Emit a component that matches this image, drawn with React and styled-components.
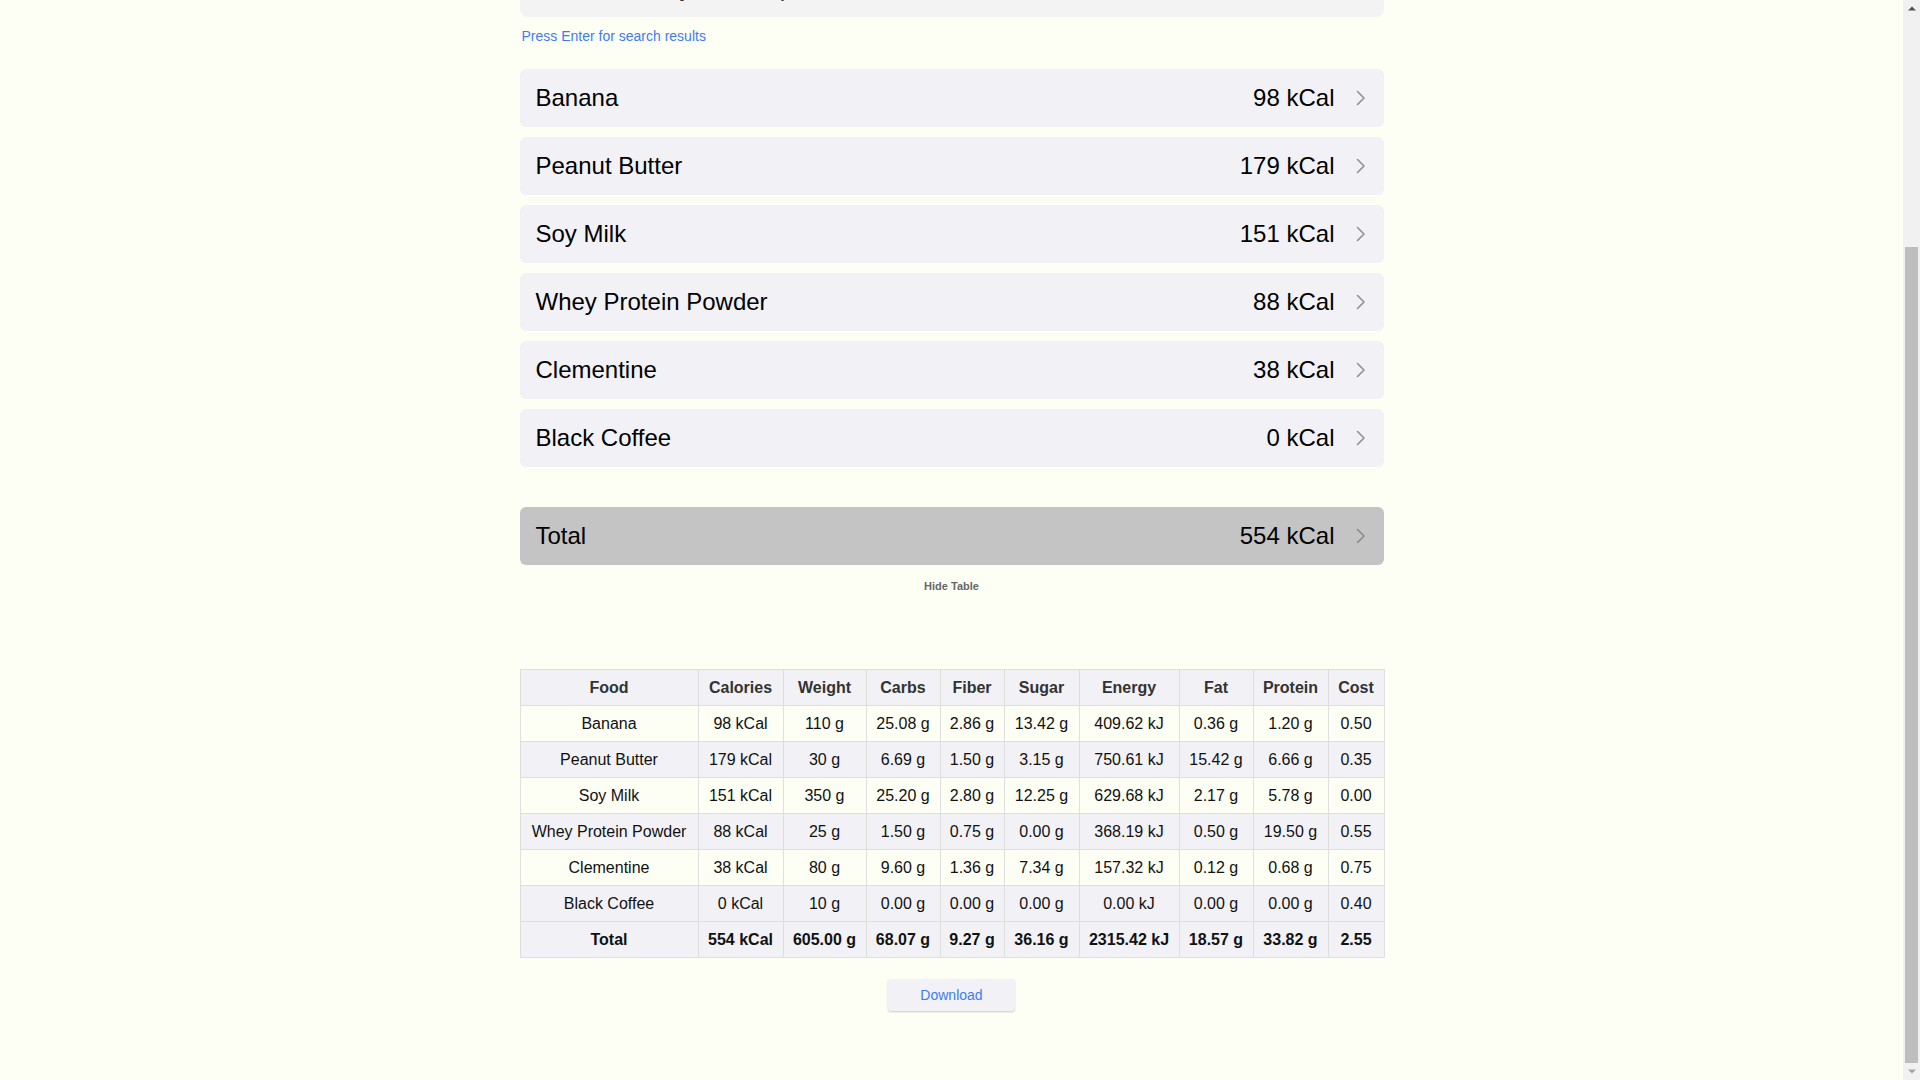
import React, { useLayoutEffect, useRef, useState } from "react";
import styled, { createGlobalStyle } from "styled-components";

const GlobalStyle = createGlobalStyle`
  html, body {
    margin: 0;
    padding: 0;
    height: 100%;
    overflow: hidden;
    background: #fdfff5;
    font-family: "Liberation Sans", Arial, Helvetica, sans-serif;
    color: #111;
  }
  #root { height: 100%; }
  * { box-sizing: border-box; }
`;

const Viewport = styled.div`
  display: flex;
  height: 100vh;
  background: #fdfff5;
`;

const Pane = styled.main`
  flex: 1;
  min-width: 0;
  height: 100%;
  overflow: hidden;
`;

const Rail = styled.div`
  width: 17px;
  flex: none;
  height: 100%;
  background: #f1f1f1;
  display: flex;
  flex-direction: column;
`;

const RailButton = styled.div`
  height: 17px;
  flex: none;
  display: flex;
  align-items: center;
  justify-content: center;
`;

const Track = styled.div`
  flex: 1;
  display: flex;
  flex-direction: column;
  padding: 0 2px;
`;

const Thumb = styled.div`
  flex: none;
  background: #bebebe;
`;

const Page = styled.div`
  width: 864px;
  margin: 0 auto;
  padding: 264px 0 69px;
  display: flex;
  flex-direction: column;
`;

const SearchBox = styled.div`
  height: 58px;
  background: #f3f3f3;
  border-radius: 8px;
  display: flex;
  align-items: center;
  padding: 0 18px 0 16px;
`;

const SearchInput = styled.input`
  flex: 1;
  border: none;
  outline: none;
  background: transparent;
  font-family: "Liberation Sans", Arial, sans-serif;
  font-size: 24px;
  color: #333;
  padding: 0;
`;

const Hint = styled.div`
  margin-top: 11px;
  padding-left: 2px;
  font-size: 14px;
  line-height: 16px;
  color: #3d7bf5;
`;

const List = styled.div`
  margin-top: 25px;
  display: flex;
  flex-direction: column;
  gap: 10px;
`;

const Row = styled.div`
  height: 58px;
  border-radius: 6px;
  background: ${(p) => (p.$total ? "#c4c4c4" : "#f2f2f6")};
  display: flex;
  align-items: center;
  justify-content: space-between;
  padding: 0 18px 0 16px;
  font-size: 24px;
  color: #000;
  margin-top: ${(p) => (p.$total ? "40px" : "0")};
`;

const RowRight = styled.div`
  display: flex;
  align-items: center;
  gap: 21px;
`;

const HideButton = styled.button`
  align-self: center;
  margin-top: 14px;
  border: none;
  background: transparent;
  padding: 0;
  font-family: "Liberation Sans", Arial, sans-serif;
  font-size: 11px;
  line-height: 14px;
  font-weight: 700;
  color: #666;
  cursor: pointer;
`;

const Table = styled.table`
  margin-top: 76px;
  width: 864px;
  border-collapse: collapse;
  table-layout: fixed;
  font-size: 16px;
`;

const Th = styled.th`
  height: 36px;
  padding: 0 4px;
  border: 1px solid #dedede;
  background: #f2f2f6;
  color: #333;
  font-weight: 700;
  text-align: center;
  white-space: nowrap;
`;

const Tr = styled.tr`
  background: ${(p) => (p.$shade ? "#f2f2f6" : "transparent")};
`;

const Td = styled.td`
  height: 36px;
  padding: 0 4px;
  border: 1px solid #dedede;
  text-align: center;
  white-space: nowrap;
  color: #111;
  font-weight: ${(p) => (p.$bold ? 700 : 400)};
`;

const DownloadButton = styled.button`
  align-self: center;
  margin-top: 21px;
  width: 127px;
  height: 32px;
  border: none;
  border-radius: 3px;
  background: #f2f2f6;
  box-shadow: 0 1px 2px rgba(120, 110, 80, 0.35);
  font-family: "Liberation Sans", Arial, sans-serif;
  font-size: 14px;
  color: #3d7bf5;
  cursor: pointer;
`;

const Chevron = ({ color = "#8e8e93" }) => (
  <svg width="10" height="16" viewBox="0 0 10 16" fill="none">
    <polyline
      points="1.5,1.5 8,8 1.5,14.5"
      stroke={color}
      strokeWidth="1.6"
      strokeLinecap="round"
      strokeLinejoin="round"
    />
  </svg>
);

const ArrowUp = () => (
  <svg width="8" height="5" viewBox="0 0 8 5">
    <polygon points="0,4.5 8,4.5 4,0.5" fill="#505050" />
  </svg>
);

const ArrowDown = () => (
  <svg width="8" height="5" viewBox="0 0 8 5">
    <polygon points="0,0.5 8,0.5 4,4.5" fill="#a3a3a3" />
  </svg>
);

const foods = [
  { name: "Banana", cal: 98, w: "110 g", carbs: "25.08 g", fiber: "2.86 g", sugar: "13.42 g", energy: "409.62 kJ", fat: "0.36 g", protein: "1.20 g", cost: "0.50" },
  { name: "Peanut Butter", cal: 179, w: "30 g", carbs: "6.69 g", fiber: "1.50 g", sugar: "3.15 g", energy: "750.61 kJ", fat: "15.42 g", protein: "6.66 g", cost: "0.35" },
  { name: "Soy Milk", cal: 151, w: "350 g", carbs: "25.20 g", fiber: "2.80 g", sugar: "12.25 g", energy: "629.68 kJ", fat: "2.17 g", protein: "5.78 g", cost: "0.00" },
  { name: "Whey Protein Powder", cal: 88, w: "25 g", carbs: "1.50 g", fiber: "0.75 g", sugar: "0.00 g", energy: "368.19 kJ", fat: "0.50 g", protein: "19.50 g", cost: "0.55" },
  { name: "Clementine", cal: 38, w: "80 g", carbs: "9.60 g", fiber: "1.36 g", sugar: "7.34 g", energy: "157.32 kJ", fat: "0.12 g", protein: "0.68 g", cost: "0.75" },
  { name: "Black Coffee", cal: 0, w: "10 g", carbs: "0.00 g", fiber: "0.00 g", sugar: "0.00 g", energy: "0.00 kJ", fat: "0.00 g", protein: "0.00 g", cost: "0.40" },
];

const total = {
  name: "Total", cal: 554, w: "605.00 g", carbs: "68.07 g", fiber: "9.27 g", sugar: "36.16 g", energy: "2315.42 kJ", fat: "18.57 g", protein: "33.82 g", cost: "2.55",
};

const colWidths = [178, 85, 83, 74, 64, 75, 100, 74, 75, 56];
const headers = ["Food", "Calories", "Weight", "Carbs", "Fiber", "Sugar", "Energy", "Fat", "Protein", "Cost"];

const cells = (f) => [f.name, `${f.cal} kCal`, f.w, f.carbs, f.fiber, f.sugar, f.energy, f.fat, f.protein, f.cost];

export default function App() {
  const paneRef = useRef(null);
  const trackRef = useRef(null);
  const [thumb, setThumb] = useState({ top: 230, height: 816 });

  useLayoutEffect(() => {
    const pane = paneRef.current;
    const track = trackRef.current;
    if (!pane || !track) return;
    pane.scrollTop = pane.scrollHeight;
    const sh = pane.scrollHeight;
    const ch = pane.clientHeight;
    const st = pane.scrollTop;
    const th = track.clientHeight;
    setThumb({ top: (th * st) / sh, height: (th * ch) / sh });
  }, []);

  return (
    <>
      <GlobalStyle />
      <Viewport>
        <Pane ref={paneRef}>
          <Page>
            <SearchBox>
              <SearchInput defaultValue="Search for any food or paste a list" readOnly />
              <Chevron />
            </SearchBox>
            <Hint>Press Enter for search results</Hint>
            <List>
              {foods.map((f) => (
                <Row key={f.name}>
                  <span>{f.name}</span>
                  <RowRight>
                    <span>{f.cal} kCal</span>
                    <Chevron />
                  </RowRight>
                </Row>
              ))}
            </List>
            <Row $total>
              <span>Total</span>
              <RowRight>
                <span>554 kCal</span>
                <Chevron color="#8a8a8a" />
              </RowRight>
            </Row>
            <HideButton>Hide Table</HideButton>
            <Table>
              <colgroup>
                {colWidths.map((w, i) => (
                  <col key={i} style={{ width: w }} />
                ))}
              </colgroup>
              <thead>
                <tr>
                  {headers.map((h) => (
                    <Th key={h}>{h}</Th>
                  ))}
                </tr>
              </thead>
              <tbody>
                {foods.map((f, i) => (
                  <Tr key={f.name} $shade={i % 2 === 1}>
                    {cells(f).map((c, j) => (
                      <Td key={j}>{c}</Td>
                    ))}
                  </Tr>
                ))}
              </tbody>
              <tfoot>
                <Tr $shade>
                  {cells(total).map((c, j) => (
                    <Td key={j} $bold>{c}</Td>
                  ))}
                </Tr>
              </tfoot>
            </Table>
            <DownloadButton>Download</DownloadButton>
          </Page>
        </Pane>
        <Rail aria-hidden="true">
          <RailButton>
            <ArrowUp />
          </RailButton>
          <Track ref={trackRef}>
            <Thumb style={{ marginTop: thumb.top, height: thumb.height }} />
          </Track>
          <RailButton>
            <ArrowDown />
          </RailButton>
        </Rail>
      </Viewport>
    </>
  );
}
